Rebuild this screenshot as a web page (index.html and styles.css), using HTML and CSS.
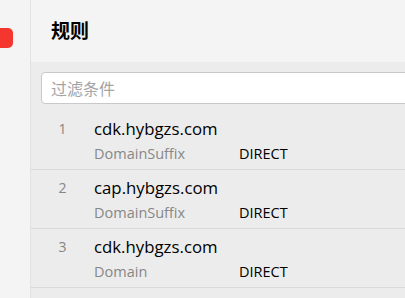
FILE: index.html
```html
<!DOCTYPE html>
<html>
<head>
<meta charset="utf-8">
<link rel="stylesheet" href="styles.css">
</head>
<body>
<div class="app">
  <aside class="sidebar">
    <div class="active-mark"></div>
  </aside>
  <main class="main">
    <header class="header"><h1 class="title">规则</h1></header>
    <section class="content">
      <div class="filter"><input class="filter-input" type="text" placeholder="过滤条件"></div>
      <ul class="rules">
        <li class="rule">
          <span class="idx">1</span>
          <div class="body">
            <div class="payload">cdk.hybgzs.com</div>
            <div class="meta"><span class="type">DomainSuffix</span><span class="proxy">DIRECT</span></div>
          </div>
        </li>
        <li class="rule">
          <span class="idx">2</span>
          <div class="body">
            <div class="payload">cap.hybgzs.com</div>
            <div class="meta"><span class="type">DomainSuffix</span><span class="proxy">DIRECT</span></div>
          </div>
        </li>
        <li class="rule">
          <span class="idx">3</span>
          <div class="body">
            <div class="payload">cdk.hybgzs.com</div>
            <div class="meta"><span class="type">Domain</span><span class="proxy">DIRECT</span></div>
          </div>
        </li>
      </ul>
    </section>
  </main>
</div>
</body>
</html>
```
FILE: styles.css
```css
* { box-sizing: border-box; }
html, body { margin: 0; padding: 0; height: 100%; overflow: hidden; }
body {
  font-family: "Segoe UI", "Open Sans", "Noto Sans CJK SC", sans-serif;
  color: #000;
  background: #f4f4f4;
}
.app { display: flex; height: 298px; }
.sidebar {
  width: 31px;
  flex: none;
  background: #f4f4f4;
  border-right: 1px solid #e2e2e2;
  padding-top: 28px;
}
.active-mark {
  width: 13px;
  height: 20px;
  background: #f5362f;
  border-radius: 0 5px 5px 0;
}
.main { flex: 1; display: flex; flex-direction: column; min-width: 0; }
.header {
  height: 62px;
  background: #f4f4f4;
  display: flex;
  align-items: center;
  padding-left: 20px;
  flex: none;
}
.title {
  margin: 0;
  font-family: "Noto Sans CJK SC", sans-serif;
  font-size: 19px;
  font-weight: 700;
  line-height: 1;
  padding-bottom: 3px;
}
.content { flex: 1; background: #ececec; padding: 10px 0 0 10px; }
.filter-input {
  display: block;
  width: 380px;
  height: 32px;
  border: 1px solid #c9c9c9;
  border-radius: 4px;
  background: #fff;
  padding: 0 9px;
  font-family: "Noto Sans CJK SC", sans-serif;
  font-size: 16px;
  outline: none;
}
.filter-input::placeholder { color: #a4a4a4; }
.rules { list-style: none; margin: 7px 0 0 -10px; padding: 0; }
.rule {
  display: flex;
  height: 59px;
  border-bottom: 1px solid #dadada;
  padding-top: 7px;
}
.idx {
  width: 63px;
  flex: none;
  text-align: center;
  font-size: 14px;
  color: #858585;
  line-height: 22px;
}
.body { display: flex; flex-direction: column; }
.payload { font-size: 16.8px; line-height: 22px; color: #000; }
.meta { display: flex; font-size: 14.5px; line-height: 19px; margin-top: 4px; }
.type { width: 145px; color: #878787; }
.proxy { color: #000; }
```
